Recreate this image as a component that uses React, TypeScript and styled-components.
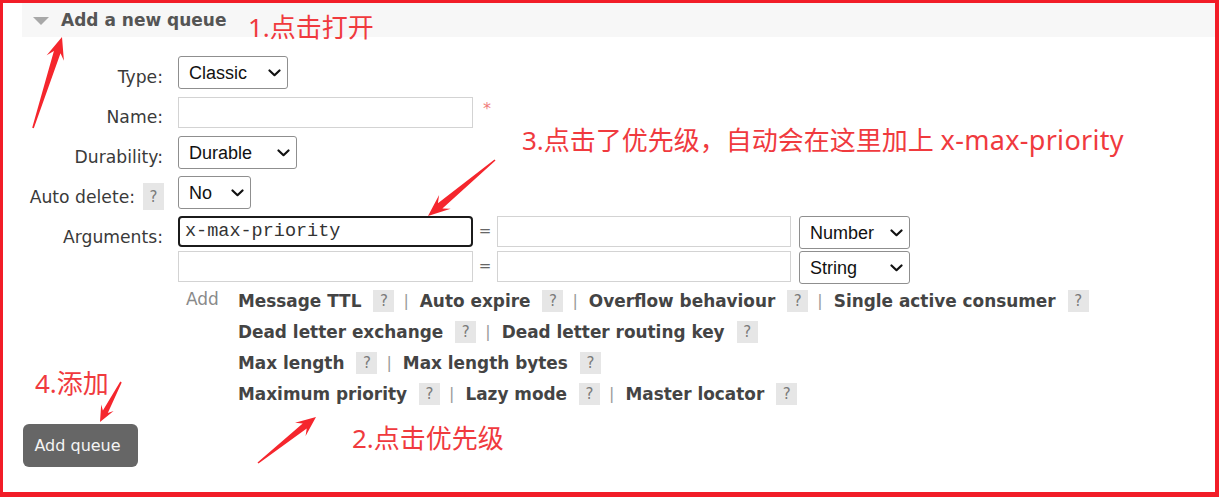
import React from "react";
import styled, { createGlobalStyle } from "styled-components";

const GlobalStyle = createGlobalStyle`
  html, body { margin: 0; padding: 0; background: #fff; }
  body { font-family: "DejaVu Sans", Verdana, sans-serif; }
`;

const Frame = styled.div`
  position: relative;
  box-sizing: border-box;
  width: 1219px;
  height: 497px;
  border-style: solid;
  border-color: #f21d28;
  border-width: 3px 4px 5px 3px;
  background: #fff;
  padding-left: 19px;
  overflow: hidden;
`;

const Header = styled.div`
  display: flex;
  align-items: center;
  gap: 12px;
  height: 34px;
  background: #f7f7f7;
  padding-left: 11px;
`;

const Caret = styled.span`
  width: 0;
  height: 0;
  border-left: 8px solid transparent;
  border-right: 8px solid transparent;
  border-top: 8px solid #a8a8a8;
  margin-top: 2px;
`;

const Title = styled.h2`
  margin: 0;
  font-size: 17px;
  font-weight: bold;
  color: #555;
`;

const Form = styled.div`
  margin-top: 19px;
  display: flex;
  flex-direction: column;
`;

const Row = styled.div`
  display: flex;
  align-items: flex-start;
  gap: 15px;
  min-height: 40px;
`;

const Label = styled.label`
  box-sizing: border-box;
  width: 141px;
  flex: none;
  display: flex;
  justify-content: flex-end;
  align-items: flex-start;
  gap: 8px;
  padding-top: 11px;
  font-size: 17.2px;
  line-height: 20px;
  color: #3a3a3a;
  white-space: nowrap;
`;

const Help = styled.span<{ $h?: number }>`
  display: inline-flex;
  align-items: center;
  justify-content: center;
  width: 21px;
  height: ${(p) => p.$h ?? 22}px;
  background: #e6e6e6;
  color: #7a7a7a;
  font-size: 15px;
  font-weight: normal;
  flex: none;
`;

const LabelHelp = styled(Help)`
  margin-top: -4px;
  margin-right: -1px;
`;

const Field = styled.div`
  display: flex;
  align-items: flex-start;
`;

const SelectWrap = styled.span<{ $w: number }>`
  position: relative;
  display: inline-flex;
  width: ${(p) => p.$w}px;
  height: 33px;
  flex: none;
`;

const NativeSelect = styled.select`
  appearance: none;
  -webkit-appearance: none;
  box-sizing: border-box;
  width: 100%;
  height: 100%;
  border: 1px solid #8f8f8f;
  border-radius: 3px;
  background: #fff;
  padding: 0 0 0 10px;
  font-family: "Liberation Sans", Arial, sans-serif;
  font-size: 18px;
  color: #111;
  outline: none;
`;

const Chevron = styled.svg`
  position: absolute;
  right: 7px;
  top: 13px;
  pointer-events: none;
`;

const Select: React.FC<{ w: number; value: string; options: string[] }> = ({ w, value, options }) => (
  <SelectWrap $w={w}>
    <NativeSelect defaultValue={value}>
      {options.map((o) => (
        <option key={o}>{o}</option>
      ))}
    </NativeSelect>
    <Chevron width="13" height="8" viewBox="0 0 13 8">
      <polyline points="1.5,1.5 6.5,6.2 11.5,1.5" fill="none" stroke="#111" strokeWidth="2.2" strokeLinecap="round" strokeLinejoin="round" />
    </Chevron>
  </SelectWrap>
);

const TextInput = styled.input<{ $w: number }>`
  box-sizing: border-box;
  width: ${(p) => p.$w}px;
  height: 31px;
  border: 1px solid #d3d3d3;
  border-radius: 0;
  background: #fff;
  padding: 0 5px;
  font-family: "Liberation Mono", monospace;
  font-size: 18.5px;
  color: #333;
  outline: none;
  flex: none;
`;

const NameInput = styled(TextInput)`
  margin-top: 1px;
`;

const FocusInput = styled(TextInput)`
  border: 2px solid #1b1b1b;
  border-radius: 4px;
`;

const Required = styled.span`
  margin-left: 10px;
  margin-top: 3px;
  color: #ef7b7b;
  font-size: 16px;
`;

const ArgGrid = styled.div`
  display: flex;
  flex-direction: column;
  gap: 1px;
`;

const ArgRow = styled.div`
  display: flex;
  align-items: flex-start;
  height: 34px;
`;

const Equals = styled.span`
  width: 24px;
  text-align: center;
  line-height: 31px;
  font-size: 15px;
  color: #666;
  flex: none;
`;

const TypeGap = styled.span`
  width: 8px;
  flex: none;
`;

const AddBlock = styled.div`
  display: flex;
  margin-left: 156px;
  margin-top: 0;
`;

const AddWord = styled.span`
  width: 52px;
  padding-left: 8px;
  font-size: 17px;
  line-height: 28px;
  color: #8a8a8a;
  flex: none;
`;

const Lines = styled.div`
  display: flex;
  flex-direction: column;
`;

const Line = styled.div`
  display: flex;
  align-items: center;
  height: 31px;
`;

const LinkText = styled.span`
  font-weight: bold;
  font-size: 16.9px;
  color: #444;
  white-space: nowrap;
  margin-right: 12px;
`;

const Sep = styled.span`
  margin: 0 11px 0 9px;
  font-size: 16px;
  color: #9a9a9a;
`;

const Button = styled.button`
  margin-top: 15px;
  margin-left: 1px;
  width: 115px;
  height: 43px;
  border: none;
  border-radius: 6px;
  background: #666;
  color: #f4f4f4;
  font-family: "DejaVu Sans", Verdana, sans-serif;
  font-size: 16px;
  padding: 0 6px 0 0;
  align-self: flex-start;
`;

const Overlay = styled.div`
  position: absolute;
  left: -3px;
  top: -3px;
  width: 1219px;
  height: 497px;
  pointer-events: none;
`;

const ArrowLayer = styled.svg`
  position: absolute;
  left: 0;
  top: 0;
`;

const Note = styled.span<{ $x: number; $y: number }>`
  position: absolute;
  left: ${(p) => p.$x}px;
  top: ${(p) => p.$y}px;
  font-family: "Noto Sans", "Noto Sans CJK SC", sans-serif;
  font-size: 26px;
  line-height: 26px;
  color: #f03a3e;
  white-space: nowrap;
`;

const Latin = styled.span`
  font-size: 27px;
  letter-spacing: 0.3px;
`;

type P = [number, number];
function arrow(tail: P, tip: P, headLen: number, headHalf: number, neckHalf: number): string {
  const dx = tip[0] - tail[0];
  const dy = tip[1] - tail[1];
  const len = Math.hypot(dx, dy);
  const ux = dx / len, uy = dy / len;
  const nx = -uy, ny = ux;
  const neck: P = [tip[0] - ux * headLen * 0.72, tip[1] - uy * headLen * 0.72];
  const wing: P = [tip[0] - ux * headLen, tip[1] - uy * headLen];
  const t = 0.8;
  const pts: P[] = [
    [tail[0] + nx * t, tail[1] + ny * t],
    [neck[0] + nx * neckHalf, neck[1] + ny * neckHalf],
    [wing[0] + nx * headHalf, wing[1] + ny * headHalf],
    tip,
    [wing[0] - nx * headHalf, wing[1] - ny * headHalf],
    [neck[0] - nx * neckHalf, neck[1] - ny * neckHalf],
    [tail[0] - nx * t, tail[1] - ny * t],
  ];
  return pts.map((p) => `${p[0].toFixed(1)},${p[1].toFixed(1)}`).join(" ");
}

const arrows = [
  arrow([33, 128], [62, 37], 22, 9, 3.5),
  arrow([495, 160], [428, 216], 22, 9, 3.5),
  arrow([258, 463], [316, 417], 20, 8.5, 3.2),
  arrow([121, 382], [100, 422], 16, 7, 2.8),
];

type Item = { text: string; sep?: boolean };
const lines: Item[][] = [
  [{ text: "Message TTL", sep: true }, { text: "Auto expire", sep: true }, { text: "Overflow behaviour", sep: true }, { text: "Single active consumer" }],
  [{ text: "Dead letter exchange", sep: true }, { text: "Dead letter routing key" }],
  [{ text: "Max length", sep: true }, { text: "Max length bytes" }],
  [{ text: "Maximum priority", sep: true }, { text: "Lazy mode", sep: true }, { text: "Master locator" }],
];

export default function App() {
  return (
    <>
      <GlobalStyle />
      <Frame>
        <Header>
          <Caret />
          <Title>Add a new queue</Title>
        </Header>
        <Form>
          <Row>
            <Label>Type:</Label>
            <Field>
              <Select w={110} value="Classic" options={["Classic", "Quorum", "Stream"]} />
            </Field>
          </Row>
          <Row>
            <Label>Name:</Label>
            <Field>
              <NameInput $w={295} />
              <Required>*</Required>
            </Field>
          </Row>
          <Row>
            <Label>Durability:</Label>
            <Field>
              <Select w={119} value="Durable" options={["Durable", "Transient"]} />
            </Field>
          </Row>
          <Row>
            <Label>
              Auto delete:
              <LabelHelp $h={27}>?</LabelHelp>
            </Label>
            <Field>
              <Select w={73} value="No" options={["No", "Yes"]} />
            </Field>
          </Row>
          <Row>
            <Label>Arguments:</Label>
            <ArgGrid>
              <ArgRow>
                <FocusInput $w={295} defaultValue="x-max-priority" />
                <Equals>=</Equals>
                <TextInput $w={294} />
                <TypeGap />
                <Select w={111} value="Number" options={["String", "Number", "Boolean", "List"]} />
              </ArgRow>
              <ArgRow>
                <TextInput $w={295} />
                <Equals>=</Equals>
                <TextInput $w={294} />
                <TypeGap />
                <Select w={111} value="String" options={["String", "Number", "Boolean", "List"]} />
              </ArgRow>
            </ArgGrid>
          </Row>
          <AddBlock>
            <AddWord>Add</AddWord>
            <Lines>
              {lines.map((items, i) => (
                <Line key={i}>
                  {items.map((it) => (
                    <React.Fragment key={it.text}>
                      <LinkText>{it.text}</LinkText>
                      <Help>?</Help>
                      {it.sep && <Sep>|</Sep>}
                    </React.Fragment>
                  ))}
                </Line>
              ))}
            </Lines>
          </AddBlock>
          <Button>Add queue</Button>
        </Form>
        <Overlay>
          <ArrowLayer width="1219" height="497" viewBox="0 0 1219 497">
            {arrows.map((pts, i) => (
              <polygon key={i} points={pts} fill="#f5262d" />
            ))}
          </ArrowLayer>
          <Note $x={248} $y={14}>1.点击打开</Note>
          <Note $x={522} $y={127}>
            3.点击了优先级，自动会在这里加上 <Latin>x-max-priority</Latin>
          </Note>
          <Note $x={352} $y={425}>2.点击优先级</Note>
          <Note $x={35} $y={370}>4.添加</Note>
        </Overlay>
      </Frame>
    </>
  );
}
